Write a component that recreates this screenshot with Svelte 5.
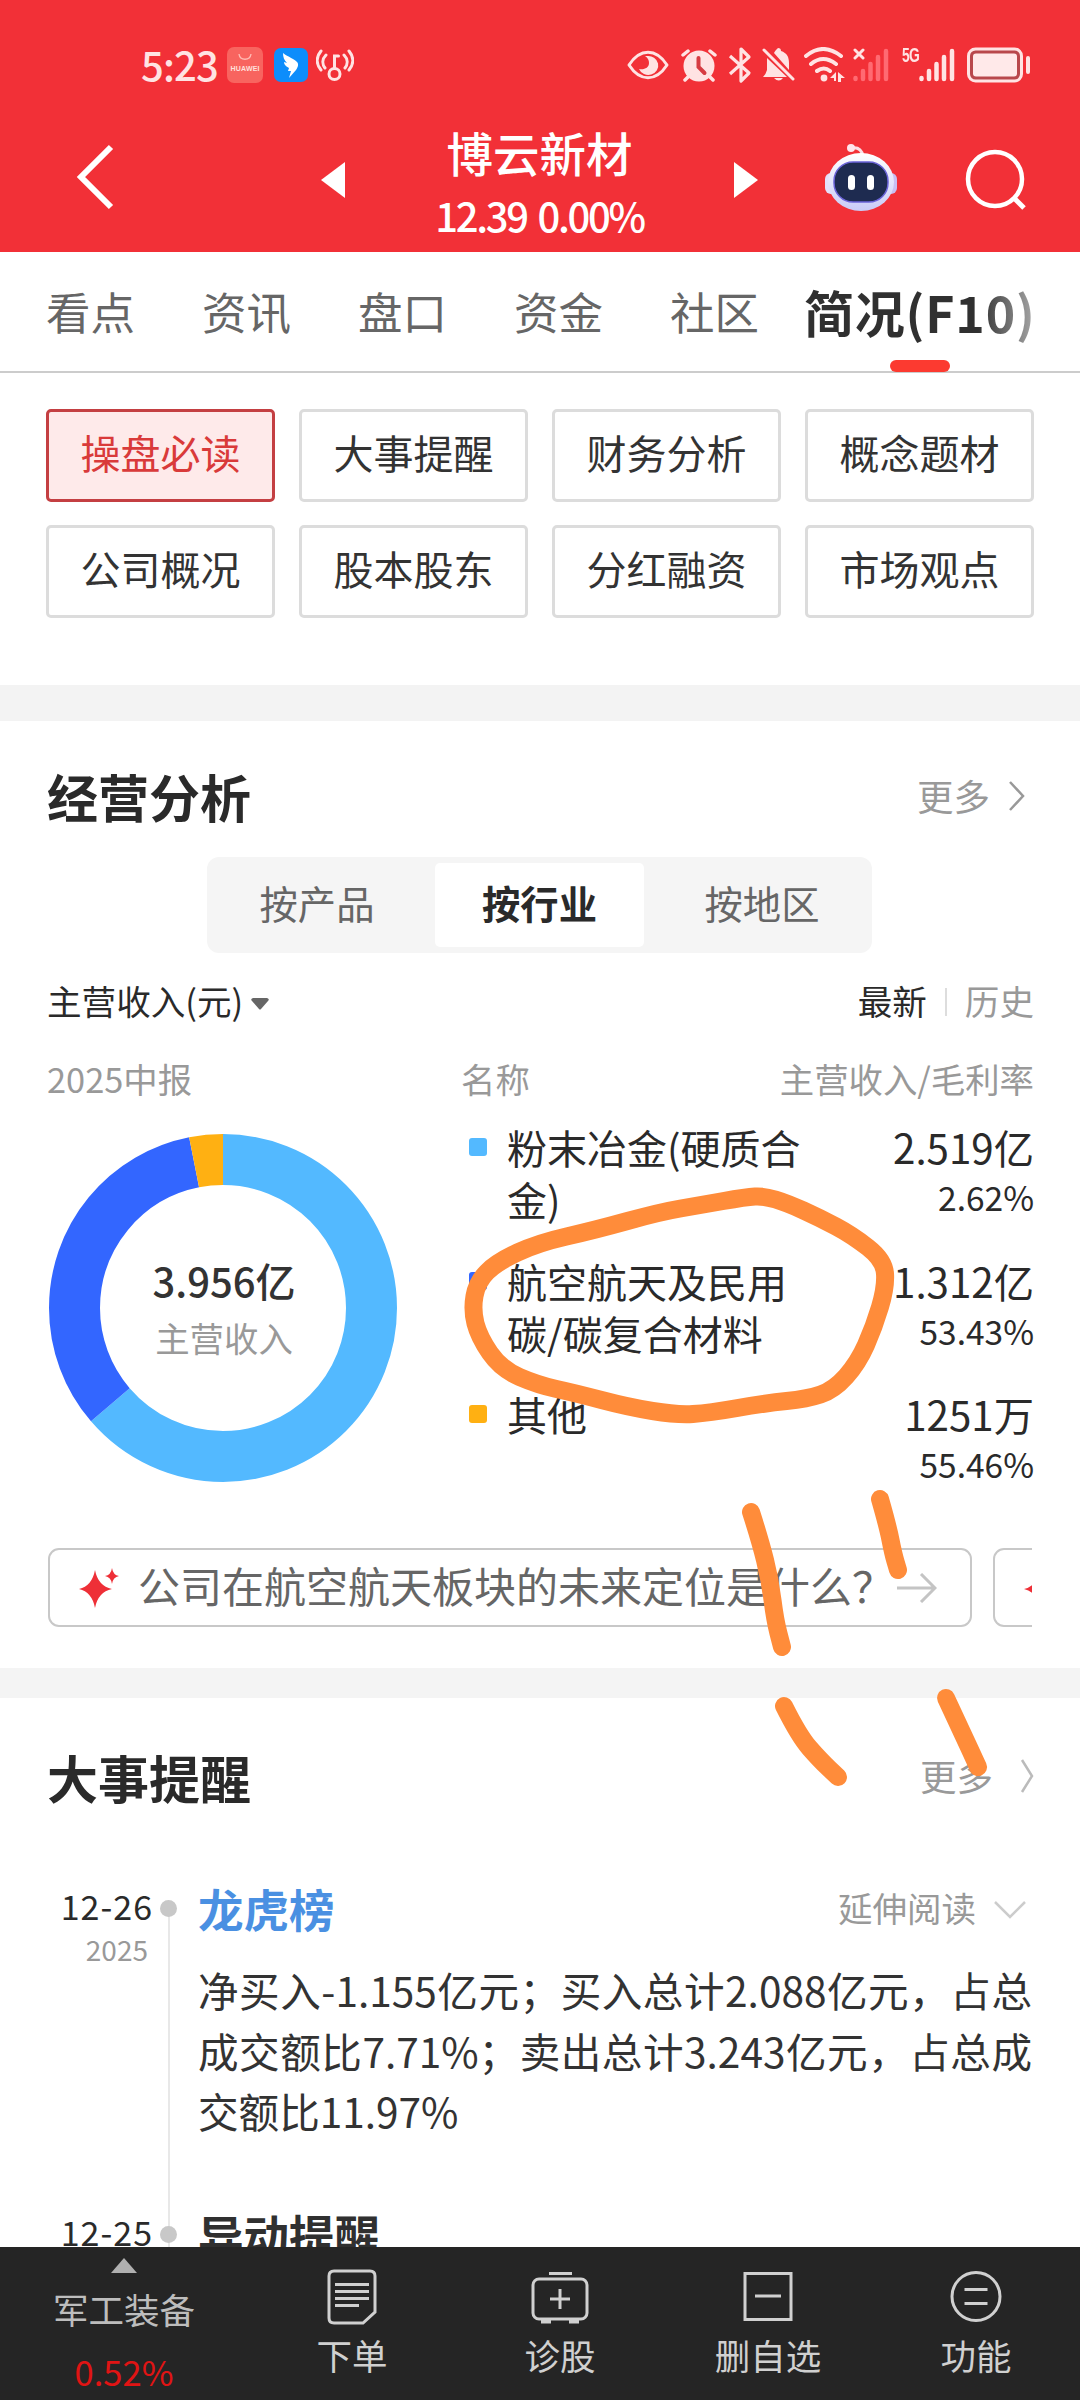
<script>
  const tabs = ["看点", "资讯", "盘口", "资金", "社区"];
  const menus = [
    "操盘必读",
    "大事提醒",
    "财务分析",
    "概念题材",
    "公司概况",
    "股本股东",
    "分红融资",
    "市场观点",
  ];
  const segments = ["按产品", "按行业", "按地区"];
  const business = [
    { name: ["粉末冶金(硬质合", "金)"], income: "2.519亿", rate: "2.62%", share: 0.6368, color: "#53b9ff" },
    { name: ["航空航天及民用", "碳/碳复合材料"], income: "1.312亿", rate: "53.43%", share: 0.3316, color: "#3366ff" },
    { name: ["其他"], income: "1251万", rate: "55.46%", share: 0.0316, color: "#ffb012" },
  ];

  // donut
  const radius = 148.5;
  const around = 2 * Math.PI * radius;
  let sum = 0;
  const slices = business.map((b) => {
    const slice = { color: b.color, length: b.share * around, offset: -sum * around };
    sum += b.share;
    return slice;
  });

  // freehand marker strokes, page coordinates
  const ring = [
    [746, 1197], [701, 1205], [660, 1212], [595, 1230], [538, 1243], [497, 1262],
    [477, 1282], [472, 1310], [479, 1337], [501, 1369], [538, 1385], [575, 1393],
    [628, 1407], [677, 1415], [709, 1413], [766, 1403], [807, 1399], [834, 1390],
    [858, 1363], [874, 1327], [886, 1287], [884, 1260], [852, 1235], [820, 1218],
    [787, 1203], [764, 1196],
  ];
  const marks = [
    [[751, 1512], [760, 1540], [770, 1580], [775, 1620], [782, 1647]],
    [[880, 1499], [888, 1527], [893, 1553], [898, 1570]],
    [[784, 1706], [799, 1736], [820, 1760], [838, 1777]],
    [[946, 1698], [961, 1730], [978, 1767]],
  ];

  const mid = (a, b) => `${(a[0] + b[0]) / 2} ${(a[1] + b[1]) / 2}`;
  const closed = (p) =>
    `M${mid(p[p.length - 1], p[0])}` +
    p.map((c, i) => `Q${c[0]} ${c[1]} ${mid(c, p[(i + 1) % p.length])}`).join("") +
    "Z";
  const open = (p) =>
    `M${p[0][0]} ${p[0][1]}` +
    p.slice(1, -1).map((c, i) => `Q${c[0]} ${c[1]} ${mid(c, p[i + 2])}`).join("") +
    `L${p[p.length - 1][0]} ${p[p.length - 1][1]}`;
</script>

<div class="page">
  <header>
    <div class="status">
      <span class="clock">5:23</span>
      <svg class="huawei" width="36" height="36" viewBox="0 0 36 36">
        <rect width="36" height="36" rx="7" fill="#f8645f" />
        <path d="M12 7c1 7 11 7 12 0" fill="none" stroke="#ffb9b2" stroke-width="1.4" />
        <text x="18" y="24" text-anchor="middle" textLength="29" class="brand">HUAWEI</text>
      </svg>
      <svg class="ding" width="34" height="34" viewBox="0 0 34 34">
        <rect width="34" height="34" rx="7" fill="#0d8dfb" />
        <path d="M9 5c5 4 12 6 14 9 2 2 1 5-1 8l-7 8 2-7h-3l1-3c-4-2-5-4-5-6l3 1c-3-3-4-6-4-10z" fill="#fff" />
      </svg>
      <svg class="key" width="38" height="34" viewBox="0 0 38 34" fill="none" stroke="#ffe3e3" stroke-width="3" stroke-linecap="round">
        <circle cx="18.500" cy="26" r="5.500" />
        <path d="M18.500 20V8h4M10 7c-4 4-4 9-1 13M5 3c-5 6-5 13 0 19M28 7c4 4 4 9 1 13M33 3c5 6 5 13 0 19" />
      </svg>
      <span class="grow"></span>
      <svg width="42" height="30" viewBox="0 0 42 30">
        <path d="M2 15C13-2 29-2 40 15 29 32 13 32 2 15Z" fill="none" stroke="#ffe3e3" stroke-width="3" stroke-linejoin="round" />
        <path d="M20 6a10 9.500 0 1 1-8 13c5 1 10-1 10-6 0-3-1-5-4-7z" fill="#ffe3e3" />
      </svg>
      <svg class="alarm" width="36" height="34" viewBox="0 0 36 34" fill="none" stroke="#ffe3e3" stroke-width="3.500" stroke-linecap="round">
        <circle cx="18" cy="18" r="15.500" fill="#ffe3e3" stroke="none" />
        <path d="M2 7l5-4M34 7l-5-4M7 29l-3 3M29 29l3 3" />
        <path d="M17.500 10v9l6 6" stroke="#d63c42" stroke-width="4" />
      </svg>
      <svg class="bt" width="24" height="38" viewBox="0 0 24 38" fill="none" stroke="#ffe3e3" stroke-width="3.200" stroke-linejoin="round">
        <path d="M2 10l19 17-8 8V3l8 8L2 28" />
      </svg>
      <svg class="bell" width="34" height="36" viewBox="0 0 34 36">
        <path d="M16 1c2 0 3 1 3 3 6 2 8 6 8 12v7L12 6q1-2 2-3zM5 11l20 19H1q3-3 4-7zM12 31h9q-4 5-9 0z" fill="#ffe3e3" />
        <path d="M2 3l29 29" stroke="#ffe3e3" stroke-width="3" stroke-linecap="round" />
      </svg>
      <svg class="wifi" width="42" height="36" viewBox="0 0 42 36" fill="none" stroke="#ffe3e3" stroke-width="4" stroke-linecap="round">
        <path d="M2 9q17-14 35 0M7 17q12-10 25 0M13 24q7-5 13 0" />
        <circle cx="20" cy="31" r="3.400" fill="#ffe3e3" stroke="none" />
        <path d="M26 31l6-6v9h-2v-3zM34 25l7 6h-4v4h-3z" fill="#ffe3e3" stroke="none" />
      </svg>
      <svg class="signal" width="36" height="36" viewBox="0 0 36 36" stroke-linecap="round" stroke-width="4.500">
        <path d="M2 3l8 8M10 3l-8 8" stroke="#ffe3e3" stroke-width="3" />
        <path d="M2.500 31v1M10 24v8M17.500 17v15M25 10v22M33 4v28" stroke="#ff6a72" />
      </svg>
      <span class="net">5G</span>
      <svg width="36" height="36" viewBox="0 0 36 36" stroke="#ffe3e3" stroke-linecap="round" stroke-width="4.500">
        <path d="M2.500 31v1M10 24v8M17.500 17v15M25 10v22M33 4v28" />
      </svg>
      <svg class="battery" width="64" height="36" viewBox="0 0 64 36">
        <rect x="1.500" y="2" width="53" height="32" rx="7" fill="#b8484c" stroke="#ffe3e3" stroke-width="3" />
        <rect x="6" y="6.500" width="44" height="23" rx="3" fill="#ffe9e9" />
        <rect x="59" y="9" width="4" height="18" rx="2" fill="#ffe3e3" />
      </svg>
    </div>

    <div class="bar">
      <svg class="back" width="38" height="66" viewBox="0 0 38 66" fill="none" stroke="#fff" stroke-width="6">
        <path d="M35 3L5 33l30 30" />
      </svg>
      <svg class="prev" width="24" height="36" viewBox="0 0 24 36"><path d="M24 0v36L0 18z" fill="#fff" /></svg>
      <div class="stock">
        <h1>博云新材</h1>
        <p>12.39 0.00%</p>
      </div>
      <svg class="next" width="24" height="36" viewBox="0 0 24 36"><path d="M0 0v36l24-18z" fill="#fff" /></svg>
      <svg class="robot" width="72" height="70" viewBox="0 0 72 70">
        <defs>
          <linearGradient id="shell" x1="0" y1="0" x2="0" y2="1">
            <stop offset="0" stop-color="#fff" />
            <stop offset="1" stop-color="#c9cbf7" />
          </linearGradient>
        </defs>
        <path d="M26 6q10-2 12 8" fill="none" stroke="#fbdfe6" stroke-width="3" />
        <circle cx="26" cy="6" r="4" fill="#ffe5ec" />
        <rect x="0" y="31" width="14" height="21" rx="6" fill="#e4e0fb" />
        <rect x="58" y="31" width="14" height="21" rx="6" fill="#c9bff2" />
        <ellipse cx="36" cy="40" rx="33" ry="29" fill="url(#shell)" />
        <rect x="9" y="20" width="54" height="40" rx="19" fill="#1e2b50" stroke="#6a63d8" stroke-width="1.500" />
        <rect x="23" y="33" width="7" height="15" rx="3.500" fill="#fff" />
        <rect x="42" y="33" width="7" height="15" rx="3.500" fill="#fff" />
      </svg>
      <svg class="search" width="62" height="62" viewBox="0 0 62 62" fill="none" stroke="#fff" stroke-width="4.500">
        <circle cx="30" cy="30" r="27" />
        <path d="M48 48l11 11" stroke-width="5" />
      </svg>
    </div>
  </header>

  <nav class="tabs">
    {#each tabs as tab}
      <span class="tab">{tab}</span>
    {/each}
    <span class="tab active">简况(F10)</span>
  </nav>

  <div class="menus">
    {#each menus as menu, i}
      <button class="menu" class:chosen={i === 0}>{menu}</button>
    {/each}
  </div>

  <section class="analysis">
    <div class="heading">
      <h2>经营分析</h2>
      <span class="more">更多</span>
      <svg class="chev" width="18" height="32" viewBox="0 0 18 32" fill="none" stroke="#999" stroke-width="2.500"><path d="M2 2l13 14L2 30" /></svg>
    </div>

    <div class="segments">
      {#each segments as segment, i}
        <span class="segment" class:on={i === 1}>{segment}</span>
      {/each}
    </div>

    <div class="filter">
      <span>主营收入(元)</span>
      <svg class="caret" width="18" height="12" viewBox="0 0 18 12"><path d="M2 0h14q3 1 1 3l-7 8q-1 1-2 0L1 3Q-1 1 2 0z" fill="#666" /></svg>
      <span class="grow"></span>
      <span>最新</span>
      <i class="divider"></i>
      <span class="gray">历史</span>
    </div>

    <div class="columns">
      <span class="period">2025中报</span>
      <span>名称</span>
      <span class="grow"></span>
      <span>主营收入/毛利率</span>
    </div>

    <div class="chart">
      <div class="donut">
        <svg width="350" height="350" viewBox="0 0 350 350">
          <g transform="rotate(-90 175 175)" fill="none" stroke-width="51">
            {#each slices as slice}
              <circle
                cx="175"
                cy="175"
                r={radius}
                stroke={slice.color}
                stroke-dasharray="{slice.length} {around}"
                stroke-dashoffset={slice.offset}
              />
            {/each}
          </g>
        </svg>
        <div class="total">
          <strong>3.956亿</strong>
          <span>主营收入</span>
        </div>
      </div>
      <ul>
        {#each business as item}
          <li>
            <i style="background: {item.color}"></i>
            <p>
              {#each item.name as line}
                <span>{line}</span>
              {/each}
            </p>
            <div class="amount">
              <span>{item.income}</span>
              <small>{item.rate}</small>
            </div>
          </li>
        {/each}
      </ul>
    </div>

    <div class="questions">
      <div class="question">
        <svg class="star" width="40" height="40" viewBox="0 0 40 40" fill="#ee2f37">
          <path d="M16 2q3 16 17 19-14 3-17 19Q13 24 0 21 13 18 16 2zM33 0q1 7 7 8-6 1-7 8-1-7-7-8 6-1 7-8z" />
        </svg>
        <span>公司在航空航天板块的未来定位是什么？</span>
        <svg width="40" height="30" viewBox="0 0 40 30" fill="none" stroke="#c4c4c4" stroke-width="3"><path d="M0 15h37M24 1l14 14-14 14" /></svg>
      </div>
      <div class="question">
        <svg class="star" width="40" height="40" viewBox="0 0 40 40" fill="#ee2f37">
          <path d="M16 2q3 16 17 19-14 3-17 19Q13 24 0 21 13 18 16 2z" />
        </svg>
      </div>
    </div>
  </section>

  <section class="events">
    <div class="heading">
      <h2>大事提醒</h2>
      <span class="more">更多</span>
      <svg class="chev" width="14" height="34" viewBox="0 0 14 34" fill="none" stroke="#bbb" stroke-width="2.500"><path d="M2 1l10 16L2 33" /></svg>
    </div>

    <article>
      <div class="date">
        <span>12-26</span>
        <small>2025</small>
      </div>
      <div class="rail first"><i></i></div>
      <div class="event">
        <div class="top">
          <h3 class="blue">龙虎榜</h3>
          <span>延伸阅读</span>
          <svg width="34" height="20" viewBox="0 0 34 20" fill="none" stroke="#ccc" stroke-width="2.500"><path d="M2 2l15 15L32 2" /></svg>
        </div>
        <p>
          <span>净买入-1.155亿元；买入总计2.088亿元，占总</span>
          <span>成交额比7.71%；卖出总计3.243亿元，占总成</span>
          <span class="last">交额比11.97%</span>
        </p>
      </div>
    </article>
    <article>
      <div class="date"><span>12-25</span></div>
      <div class="rail"><i></i></div>
      <div class="event">
        <div class="top"><h3>异动提醒</h3></div>
      </div>
    </article>
  </section>

  <footer>
    <div class="sector">
      <svg width="26" height="15" viewBox="0 0 26 15"><path d="M13 0l13 15H0z" fill="#b0b0b0" /></svg>
      <span>军工装备</span>
      <b>0.52%</b>
    </div>
    <div class="action">
      <svg width="60" height="56" viewBox="0 0 60 56" fill="none" stroke="#d0d0d0" stroke-width="3">
        <path d="M12 2h36q5 0 5 5v36L41 54H12q-5 0-5-5V7q0-5 5-5z" />
        <path d="M13 15.500h34M13 22.500h34M13 29.500h34M13 36.500h24" />
      </svg>
      <span>下单</span>
    </div>
    <div class="action">
      <svg width="60" height="56" viewBox="0 0 60 56" fill="none" stroke="#d0d0d0" stroke-width="3">
        <rect x="3" y="10" width="54" height="40" rx="6" />
        <path d="M19 4.500h23M30 20v20M20 30h20" />
        <path d="M11 52.500h10M39 52.500h10" stroke-width="4" />
      </svg>
      <span>诊股</span>
    </div>
    <div class="action">
      <svg width="60" height="56" viewBox="0 0 60 56" fill="none" stroke="#d0d0d0" stroke-width="3">
        <rect x="7" y="4.500" width="46" height="46" />
        <path d="M17 27h26" />
      </svg>
      <span>删自选</span>
    </div>
    <div class="action">
      <svg width="60" height="56" viewBox="0 0 60 56" fill="none" stroke="#d0d0d0" stroke-width="3">
        <circle cx="30" cy="27.500" r="24" />
        <path d="M18.500 20.500h23M18.500 34.500h23" />
      </svg>
      <span>功能</span>
    </div>
  </footer>

  <svg class="marker" width="1080" height="2400" viewBox="0 0 1080 2400">
    <path d={closed(ring)} />
    {#each marks as mark}
      <path d={open(mark)} />
    {/each}
  </svg>
</div>

<style>
  :global(body) {
    margin: 0;
    background: #fff;
  }

  .page {
    position: relative;
    width: 1080px;
    height: 2400px;
    display: flex;
    flex-direction: column;
    overflow: hidden;
    background: #fff;
    color: #2a2a2a;
    font-family: "Noto Sans CJK SC", sans-serif;
    white-space: nowrap;
  }

  svg {
    display: block;
    flex: none;
  }

  h1,
  h2,
  h3,
  p,
  ul {
    margin: 0;
    padding: 0;
  }

  .grow {
    flex: 1;
  }

  header {
    height: 252px;
    background: #f23037;
    color: #fff;
  }

  .status {
    height: 90px;
    padding: 40px 49px 0 141px;
    box-sizing: border-box;
    display: flex;
    align-items: center;
  }

  .clock {
    width: 86px;
    font-size: 40px;
    line-height: 50px;
    letter-spacing: -0.8px;
    margin-top: -2px;
    font-weight: 500;
    color: #ffe3e3;
  }

  .brand {
    font: bold 7px "Liberation Sans", sans-serif;
    fill: #ffe0dc;
  }

  .ding {
    margin-left: 11px;
  }

  .key {
    margin-left: 8px;
  }

  .alarm {
    margin-left: 12px;
  }

  .bt {
    margin-left: 11px;
  }

  .bell {
    margin-left: 10px;
  }

  .wifi {
    margin-left: 8px;
  }

  .signal {
    margin-left: 7px;
  }

  .net {
    width: 20px;
    margin: -20px -3px 0 13px;
    font: bold 21px/20px "Liberation Sans", sans-serif;
    letter-spacing: -1px;
    transform: scaleX(0.66);
    transform-origin: left;
    color: #ffe3e3;
  }

  .battery {
    margin-left: 12px;
  }

  .bar {
    height: 162px;
    display: flex;
    align-items: center;
    padding-left: 76px;
  }

  .back {
    margin-top: 12px;
  }

  .prev {
    margin: 18px 0 0 207px;
  }

  .stock {
    width: 389px;
    padding-top: 24px;
    text-align: center;
  }

  .stock h1 {
    font-size: 46.5px;
    line-height: 64px;
    font-weight: 500;
  }

  .stock p {
    font-size: 40px;
    line-height: 62px;
    font-weight: 500;
    letter-spacing: -2.3px;
    word-spacing: 4px;
  }

  .next {
    margin-top: 18px;
  }

  .robot {
    margin: 12px 0 0 67px;
  }

  .search {
    margin: 18px 0 0 68px;
  }

  .tabs {
    height: 119px;
    padding-left: 46px;
    border-bottom: 2px solid #ccc;
    display: flex;
  }

  .tab {
    width: 156px;
    font-size: 44.5px;
    line-height: 118px;
    color: #666;
  }

  .active {
    position: relative;
    width: auto;
    margin-left: -22px;
    font-size: 50px;
    font-weight: bold;
    letter-spacing: 0.8px;
    background: linear-gradient(90deg, #303030 75%, #aaa);
    background-clip: text;
    color: transparent;
  }

  .active::after {
    content: "";
    position: absolute;
    left: 86px;
    bottom: -1px;
    width: 60px;
    height: 12px;
    border-radius: 6px;
    background: #fc3a30;
  }

  .menus {
    height: 312px;
    box-sizing: border-box;
    padding: 36px 46px 0;
    display: grid;
    grid-template-columns: repeat(4, 1fr);
    grid-auto-rows: 93px;
    gap: 23px 24px;
  }

  .menu {
    padding: 0 0 7px;
    font: inherit;
    font-size: 40px;
    color: #333;
    background: #fff;
    border: 3px solid #dcdcdc;
    border-radius: 5px;
  }

  .chosen {
    color: #d93a3a;
    background: #feeaea;
    border-color: #c43f42;
  }

  .analysis {
    height: 983px;
    box-sizing: border-box;
    padding-left: 47px;
    border-top: 36px solid #f3f3f3;
  }

  .heading {
    display: flex;
    align-items: center;
    height: 80px;
    padding-top: 35px;
    padding-right: 54px;
  }

  h2 {
    flex: 1;
    font-size: 51px;
    line-height: 80px;
    margin-top: -1px;
  }

  .more {
    font-size: 36.5px;
    color: #999;
    margin-right: 18px;
    margin-top: -2px;
  }

  .segments {
    width: 653px;
    height: 84px;
    margin: 21px 0 0 160px;
    padding: 6px;
    display: grid;
    grid-template-columns: 208px 209px 208px;
    justify-content: space-between;
    border-radius: 12px;
    background: #f5f5f5;
  }

  .segment {
    font-size: 38.3px;
    line-height: 80px;
    text-align: center;
    color: #666;
  }

  .on {
    font-weight: bold;
    color: #2a2a2a;
    background: #fff;
    border-radius: 5px;
  }

  .filter {
    height: 60px;
    margin-top: 17px;
    padding-right: 46px;
    display: flex;
    align-items: center;
    font-size: 34.6px;
    color: #2a2a2a;
  }

  .caret {
    margin: 8px 0 0 8px;
  }

  .divider {
    width: 2px;
    height: 28px;
    margin: 4px 18px 0;
    background: #ddd;
  }

  .gray {
    color: #999;
  }

  .columns {
    height: 60px;
    margin-top: 18px;
    padding-right: 46px;
    display: flex;
    align-items: center;
    font-size: 34.4px;
    color: #999;
  }

  .period {
    width: 414px;
  }

  .chart {
    display: flex;
    height: 441px;
    padding-right: 46px;
  }

  .donut {
    margin: 25px 0 0 1px;
    width: 350px;
    height: 350px;
    display: grid;
  }

  .donut > * {
    grid-area: 1 / 1;
  }

  .total {
    display: flex;
    flex-direction: column;
    align-items: center;
    padding: 118px 0 0 2px;
  }

  .total strong {
    font-size: 40px;
    line-height: 58px;
    font-weight: 500;
    color: #333;
  }

  .total span {
    font-size: 34.4px;
    line-height: 56px;
    color: #999;
  }

  ul {
    flex: 1;
    list-style: none;
    margin: 13px 0 0 71px;
  }

  li {
    height: 133.5px;
    display: flex;
  }

  li i {
    width: 18px;
    height: 18px;
    margin: 17px 20px 0 0;
    border-radius: 3px;
  }

  li p {
    flex: 1;
    font-size: 40px;
    line-height: 52px;
  }

  li p span {
    display: block;
  }

  .amount {
    display: flex;
    flex-direction: column;
    align-items: flex-end;
    font-size: 40.3px;
    line-height: 52px;
  }

  small {
    font-size: 33.5px;
    line-height: 48px;
  }

  .questions {
    display: flex;
    gap: 21px;
    width: 984px;
    margin: -1px 0 0 1px;
    overflow: hidden;
  }

  .question {
    flex: none;
    width: 924px;
    height: 79px;
    box-sizing: border-box;
    display: flex;
    align-items: center;
    padding-left: 29px;
    border: 2px solid #c8c8c8;
    border-radius: 11px;
    font-size: 42px;
    color: #666;
  }

  .question span {
    margin: -6px 3px 0 19px;
  }

  .events {
    flex: 1;
    min-height: 0;
    overflow: hidden;
    border-top: 30px solid #f4f4f4;
  }

  .events .heading {
    padding: 39px 46px 0 47px;
  }

  .events .more {
    margin-right: 27px;
  }

  .events .more,
  .events .heading svg {
    margin-top: -3px;
  }

  article {
    height: 326px;
    display: flex;
  }

  .events .heading + article {
    margin-top: 51px;
  }

  .date {
    width: 153px;
    text-align: right;
    display: flex;
    flex-direction: column;
    padding-top: 10px;
    font-size: 34px;
    line-height: 56px;
    letter-spacing: 1px;
  }

  .date small {
    padding-right: 5px;
    font-size: 28px;
    line-height: 31px;
    letter-spacing: 0;
    color: #999;
  }

  .rail {
    width: 45px;
    background: linear-gradient(#e8e8e8, #e8e8e8) 15px 0 / 2px 100% no-repeat;
  }

  .first {
    background-position-y: 41px;
    background-size: 2px 400px;
  }

  .rail i {
    display: block;
    width: 17px;
    height: 17px;
    margin: 32px 0 0 7px;
    border-radius: 50%;
    background: #c8c8c8;
  }

  .event {
    width: 834px;
  }

  .top {
    height: 80px;
    display: flex;
    align-items: center;
    font-size: 34.5px;
    color: #999;
  }

  .top span {
    margin-top: -2px;
  }

  h3 {
    flex: 1;
    font-size: 45.5px;
    color: #303030;
  }

  .blue {
    color: #4a90e2;
  }

  .top svg {
    margin: 4px 5px 0 17px;
  }

  .event p {
    margin-top: 12px;
    font-size: 40.6px;
    line-height: 60.5px;
    color: #333;
  }

  .event p span {
    display: block;
    white-space: normal;
    height: 60.5px;
    text-align-last: justify;
  }

  .event p .last {
    text-align-last: left;
  }

  footer {
    height: 153px;
    background: #252525;
    display: flex;
    font-size: 35.5px;
    color: #d0d0d0;
  }

  .sector {
    width: 248px;
    padding-top: 11px;
    box-sizing: border-box;
    display: flex;
    flex-direction: column;
    align-items: center;
    line-height: 60px;
    color: #bdbdbd;
  }

  .sector span {
    margin-top: 6px;
  }

  .sector b {
    margin-top: 2px;
    font-size: 34.5px;
    font-weight: normal;
    color: #e01414;
  }

  .action {
    width: 208px;
    padding-top: 22px;
    display: flex;
    flex-direction: column;
    align-items: center;
    line-height: 59px;
  }

  .marker {
    position: absolute;
    left: 0;
    top: 0;
    fill: none;
    stroke: #ff8c3a;
    stroke-width: 18;
    stroke-linecap: round;
    stroke-linejoin: round;
    pointer-events: none;
  }
</style>
